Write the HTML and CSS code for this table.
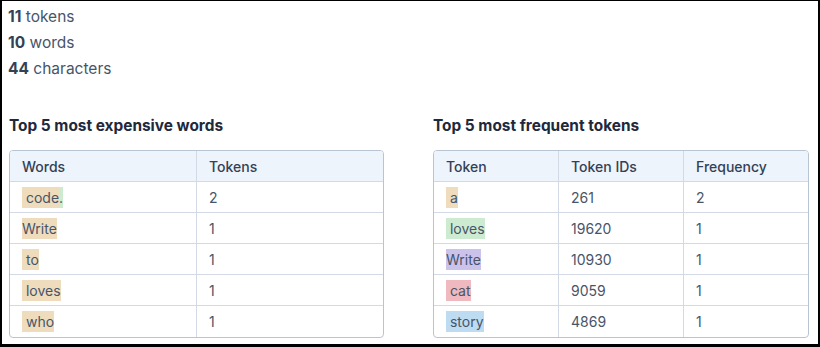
FILE: index.html
```html
<!DOCTYPE html>
<html>
<head>
<meta charset="utf-8">
<link rel="stylesheet" href="styles.css">
</head>
<body>
<div class="frame">
  <div class="stats">
    <div><b>11</b> tokens</div>
    <div><b>10</b> words</div>
    <div><b>44</b> characters</div>
  </div>
  <div class="cols">
    <section>
      <h2>Top 5 most expensive words</h2>
      <table class="t2">
        <thead><tr><th>Words</th><th>Tokens</th></tr></thead>
        <tbody>
          <tr><td><span class="tk tan"> code</span><span class="tk green">.</span></td><td>2</td></tr>
          <tr><td><span class="tk tan">Write</span></td><td>1</td></tr>
          <tr><td><span class="tk tan"> to</span></td><td>1</td></tr>
          <tr><td><span class="tk tan"> loves</span></td><td>1</td></tr>
          <tr><td><span class="tk tan"> who</span></td><td>1</td></tr>
        </tbody>
      </table>
    </section>
    <section>
      <h2>Top 5 most frequent tokens</h2>
      <table class="t3">
        <thead><tr><th>Token</th><th>Token IDs</th><th>Frequency</th></tr></thead>
        <tbody>
          <tr><td><span class="tk tan"> a</span></td><td>261</td><td>2</td></tr>
          <tr><td><span class="tk green"> loves</span></td><td>19620</td><td>1</td></tr>
          <tr><td><span class="tk purple">Write</span></td><td>10930</td><td>1</td></tr>
          <tr><td><span class="tk pink"> cat</span></td><td>9059</td><td>1</td></tr>
          <tr><td><span class="tk blue"> story</span></td><td>4869</td><td>1</td></tr>
        </tbody>
      </table>
    </section>
  </div>
</div>
</body>
</html>
```
FILE: styles.css
```css
* { box-sizing: border-box; }
html, body { margin: 0; padding: 0; background: #fff; }
body { font-family: Inter, "Noto Sans", sans-serif; color: #475569; }
.frame {
  width: 820px;
  height: 347px;
  border-style: solid;
  border-color: #000;
  border-width: 1px 2px 3px 2px;
  padding: 3px 9px 0 6px;
  overflow: hidden;
}
.stats { font-size: 15.5px; line-height: 26px; color: #475569; }
.stats b { font-weight: 700; color: #334155; }
.cols {
  display: grid;
  grid-template-columns: 375px 376px;
  column-gap: 49px;
  margin-top: 34px;
  padding-left: 1px;
}
h2 {
  margin: 0 0 14px 0;
  font-size: 15.4px;
  line-height: 20px;
  font-weight: 700;
  color: #1e293b;
}
table {
  width: 100%;
  border-collapse: separate;
  border-spacing: 0;
  border: 1px solid #b9c4d2;
  border-radius: 4px;
  overflow: hidden;
  font-size: 14px;
}
th, td {
  text-align: left;
  height: 31px;
  padding: 0 12px;
  border-right: 1px solid #d3dae6;
  border-bottom: 1px solid #d3dae6;
}
th:last-child, td:last-child { border-right: none; }
tbody tr:last-child td { border-bottom: none; }
th { background: #eef4fb; font-weight: 500; color: #334155; }
td { color: #475569; }
.t2 th:first-child, .t2 td:first-child { width: 187px; }
.t3 th:nth-child(1), .t3 td:nth-child(1) { width: 125px; }
.t3 th:nth-child(2), .t3 td:nth-child(2) { width: 125px; }
.tk { white-space: pre; padding: 2px 0; }
.tan { background: #efdcbd; }
.green { background: #cdebd0; }
.purple { background: #cbc3ec; }
.pink { background: #efb9bf; }
.blue { background: #bddcf2; }
```
